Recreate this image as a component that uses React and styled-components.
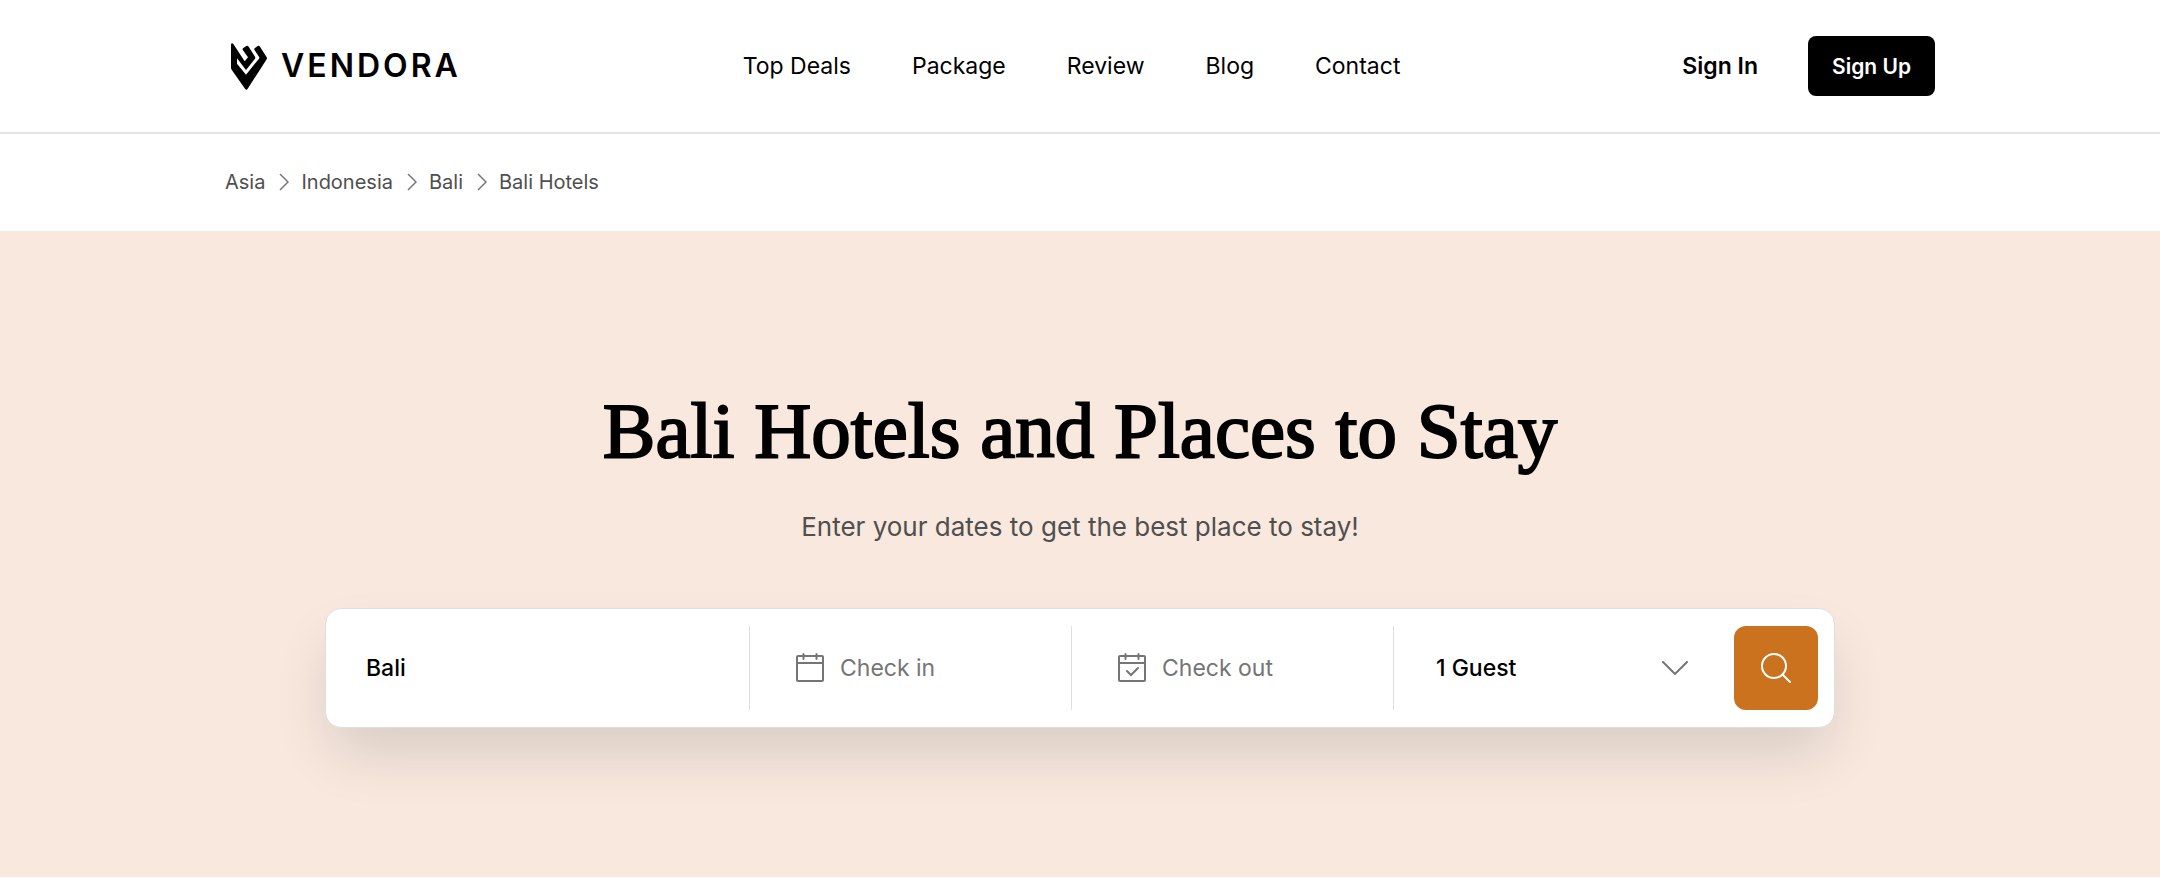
import React, { useState } from "react";
import styled, { createGlobalStyle } from "styled-components";

const navLinks = ["Top Deals", "Package", "Review", "Blog", "Contact"];
const crumbs = ["Asia", "Indonesia", "Bali", "Bali Hotels"];

export default function App() {
  const [place, setPlace] = useState("Bali");
  const [guests, setGuests] = useState("1");

  return (
    <>
      <GlobalStyle />
      <Header>
        <HeaderInner>
          <Brand href="#">
            <LogoMark />
            <BrandName>VENDORA</BrandName>
          </Brand>
          <Nav aria-label="Main">
            {navLinks.map((label) => (
              <NavLink key={label} href="#">
                {label}
              </NavLink>
            ))}
          </Nav>
          <Account>
            <SignIn href="#">Sign In</SignIn>
            <SignUp type="button">Sign Up</SignUp>
          </Account>
        </HeaderInner>
      </Header>

      <Breadcrumb aria-label="Breadcrumb">
        {crumbs.map((label, index) => (
          <React.Fragment key={label}>
            {index > 0 && <CrumbArrow />}
            <CrumbLink href="#">{label}</CrumbLink>
          </React.Fragment>
        ))}
      </Breadcrumb>

      <Hero>
        <Title>Bali Hotels and Places to Stay</Title>
        <Subtitle>Enter your dates to get the best place to stay!</Subtitle>
        <SearchBar onSubmit={(e) => e.preventDefault()}>
          <Field>
            <Input
              $strong
              aria-label="Destination"
              value={place}
              onChange={(e) => setPlace(e.target.value)}
            />
          </Field>
          <Field $divider>
            <CalendarIcon />
            <Input aria-label="Check in" placeholder="Check in" />
          </Field>
          <Field $divider>
            <CalendarIcon checked />
            <Input aria-label="Check out" placeholder="Check out" />
          </Field>
          <Field $divider>
            <Select
              aria-label="Guests"
              value={guests}
              onChange={(e) => setGuests(e.target.value)}
            >
              <option value="1">1 Guest</option>
              <option value="2">2 Guests</option>
              <option value="3">3 Guests</option>
            </Select>
            <DownIcon />
          </Field>
          <SearchButton type="submit" aria-label="Search">
            <SearchIcon />
          </SearchButton>
        </SearchBar>
      </Hero>
    </>
  );
}

function LogoMark() {
  return (
    <svg width="36" height="47" viewBox="0 0 108 141" aria-hidden="true">
      <path d="M0 3Q3 -1 7 3L41 55L51 43L35 20Q34 17 37 15L46 9Q50 7 53 11L72 41Q74 44 72 47L45 81L18 46V62L45 95L84 47Q86 44 84 41L70 20Q69 17 72 15L80 9Q84 7 87 11L107 43Q109 46 107 49L50 137Q46 143 42 137L2 80Q0 77 0 74Z" />
    </svg>
  );
}

function CrumbArrow() {
  return (
    <ArrowSvg width="10" height="18" viewBox="0 0 10 18" aria-hidden="true">
      <path d="M1 1L9 9L1 17" />
    </ArrowSvg>
  );
}

function CalendarIcon({ checked }) {
  return (
    <LineSvg width="28" height="30" viewBox="0 0 28 30" aria-hidden="true">
      <rect x="1" y="3" width="26" height="25" rx="1" />
      <path d="M1 10H27M7.5 1V6M20.5 1V6" />
      {checked && <path d="M9 18L13 22L20 15" />}
    </LineSvg>
  );
}

function DownIcon() {
  return (
    <ChevronSvg width="26" height="14" viewBox="0 0 26 14" aria-hidden="true">
      <path d="M1 1L13 13L25 1" />
    </ChevronSvg>
  );
}

function SearchIcon() {
  return (
    <LineSvg $light width="30" height="30" viewBox="0 0 30 30" aria-hidden="true">
      <circle cx="13" cy="13" r="12" />
      <path d="M21.5 21.5L29 29" />
    </LineSvg>
  );
}

const GlobalStyle = createGlobalStyle`
  *, *::before, *::after {
    box-sizing: border-box;
  }

  body {
    margin: 0;
    background: #fff;
    color: #000;
    font-family: Inter, sans-serif;
  }

  a {
    color: inherit;
    text-decoration: none;
  }
`;

const Header = styled.header`
  border-bottom: 2px solid #e3e3e3;
`;

const HeaderInner = styled.div`
  display: flex;
  align-items: center;
  justify-content: space-between;
  max-width: 1710px;
  height: 132px;
  margin: 0 auto;
`;

const Brand = styled.a`
  display: flex;
  align-items: center;
  gap: 14px;
  padding-left: 6px;
`;

const BrandName = styled.span`
  font-size: 32px;
  font-weight: 600;
  line-height: 40px;
  letter-spacing: 3px;
`;

const Nav = styled.nav`
  display: flex;
  gap: 61px;
`;

const NavLink = styled.a`
  font-size: 23px;
  line-height: 32px;
`;

const Account = styled.div`
  display: flex;
  align-items: center;
  gap: 50px;
`;

const SignIn = styled.a`
  font-size: 23px;
  font-weight: 600;
  line-height: 32px;
`;

const SignUp = styled.button`
  height: 60px;
  padding: 0 24px;
  border: 0;
  border-radius: 8px;
  background: #000;
  color: #fff;
  font-family: inherit;
  font-size: 21px;
  font-weight: 600;
`;

const Breadcrumb = styled.nav`
  display: flex;
  align-items: center;
  max-width: 1710px;
  height: 97px;
  margin: 0 auto;
  padding-bottom: 2px;
`;

const CrumbLink = styled.a`
  color: #4f4f4f;
  font-size: 20px;
  line-height: 28px;
`;

const ArrowSvg = styled.svg`
  margin: 0 12px 0 14px;
  fill: none;
  stroke: #757575;
  stroke-width: 1.5;
`;

const Hero = styled.section`
  display: flex;
  flex-direction: column;
  align-items: center;
  padding: 152px 40px 149px;
  background: #f8e8de;
`;

const Title = styled.h1`
  margin: 0;
  font-family: "Liberation Serif", serif;
  font-size: 79px;
  font-weight: 400;
  line-height: 96px;
  text-align: center;
  -webkit-text-stroke: 2px #000;
`;

const Subtitle = styled.p`
  margin: 30px 0 63px;
  color: #4f4f4f;
  font-size: 26px;
  line-height: 36px;
`;

const SearchBar = styled.form`
  display: grid;
  grid-template-columns: 407fr 322fr 322fr 341fr 84px;
  align-items: center;
  width: 100%;
  max-width: 1510px;
  padding: 17px 16px;
  border: 1px solid #dedede;
  border-radius: 16px;
  background: #fff;
  box-shadow: 0 30px 60px -8px rgba(16, 24, 20, 0.14);
`;

const Field = styled.div`
  display: flex;
  align-items: center;
  gap: 16px;
  min-width: 0;
  height: 84px;
  padding: ${({ $divider }) => ($divider ? "0 46px" : "0 24px")};
  border-left: ${({ $divider }) => ($divider ? "1px solid #dedede" : "0")};
`;

const Input = styled.input`
  flex: 1;
  min-width: 0;
  padding: 0;
  border: 0;
  outline: 0;
  background: transparent;
  color: #000;
  font-family: inherit;
  font-size: 23px;
  font-weight: ${({ $strong }) => ($strong ? 500 : 400)};
  line-height: 32px;

  &::placeholder {
    color: #757575;
    opacity: 1;
  }
`;

const Select = styled.select`
  flex: 1;
  min-width: 0;
  margin-left: -4px;
  padding: 0;
  border: 0;
  outline: 0;
  appearance: none;
  background: transparent;
  color: #000;
  font-family: inherit;
  font-size: 23px;
  font-weight: 500;
  line-height: 32px;
`;

const LineSvg = styled.svg`
  flex: none;
  fill: none;
  stroke: ${({ $light }) => ($light ? "#fff" : "#757575")};
  stroke-width: 2;
  stroke-linecap: round;
`;

const ChevronSvg = styled(LineSvg)`
  pointer-events: none;
`;

const SearchButton = styled.button`
  display: flex;
  align-items: center;
  justify-content: center;
  width: 84px;
  height: 84px;
  padding: 0;
  border: 0;
  border-radius: 12px;
  background: #cb721e;
`;
